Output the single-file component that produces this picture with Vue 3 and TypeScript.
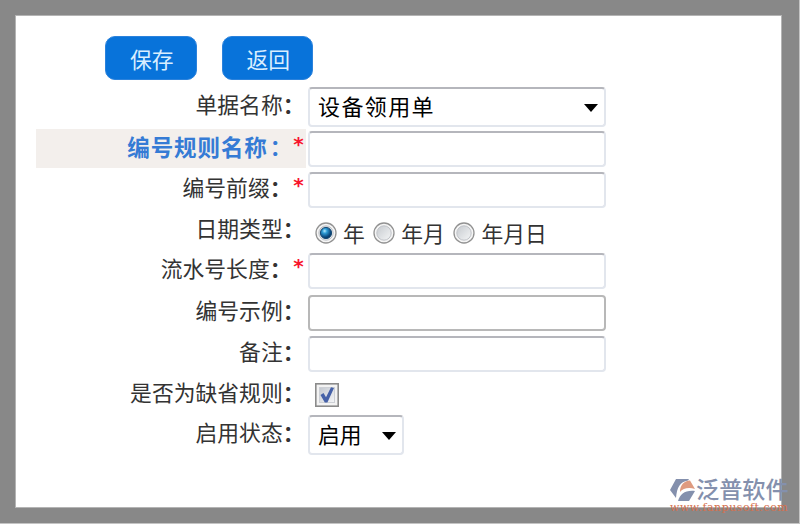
<script setup lang="ts">
import { ref } from 'vue'

interface Row {
  key: string
  label: string
  kind: 'select' | 'text' | 'radio' | 'check' | 'status'
  required?: boolean
  active?: boolean
  framed?: boolean
}

const rows: Row[] = [
  { key: 'doc', label: '单据名称', kind: 'select' },
  { key: 'rule', label: '编号规则名称', kind: 'text', required: true, active: true },
  { key: 'prefix', label: '编号前缀', kind: 'text', required: true },
  { key: 'date', label: '日期类型', kind: 'radio' },
  { key: 'length', label: '流水号长度', kind: 'text', required: true },
  { key: 'sample', label: '编号示例', kind: 'text', framed: true },
  { key: 'remark', label: '备注', kind: 'text' },
  { key: 'default', label: '是否为缺省规则', kind: 'check' },
  { key: 'status', label: '启用状态', kind: 'status' },
]

const dateTypes = ['年', '年月', '年月日']
const dateType = ref('年')
const isDefault = ref(true)
const values = ref<Record<string, string>>({})
</script>

<template>
  <div class="frame">
    <main class="panel">
      <div class="actions">
        <button class="btn" type="button">保存</button>
        <button class="btn" type="button">返回</button>
      </div>
      <div v-for="row in rows" :key="row.key" class="row" :class="'row-' + row.key">
        <div class="label" :class="{ active: row.active }">
          <span class="name">{{ row.label }}</span><span class="colon">：</span><span v-if="row.required" class="star">*</span>
        </div>
        <div class="control">
          <div v-if="row.kind === 'select'" class="box select wide">
            <span>设备领用单</span>
            <svg class="arrow" viewBox="0 0 14 8"><path d="M0 0h14L7 8z" /></svg>
          </div>
          <input v-else-if="row.kind === 'text'" v-model="values[row.key]" class="box" :class="{ framed: row.framed }" type="text" />
          <div v-else-if="row.kind === 'radio'" class="radios">
            <label v-for="t in dateTypes" :key="t" class="option" @click="dateType = t">
              <svg class="radio" viewBox="0 0 22 22">
                <defs>
                  <radialGradient id="ball" cx=".38" cy=".32" r=".7">
                    <stop offset="0" stop-color="#b5eaff" />
                    <stop offset=".3" stop-color="#2e9cd5" />
                    <stop offset=".75" stop-color="#0b4c82" />
                    <stop offset="1" stop-color="#08305a" />
                  </radialGradient>
                  <linearGradient id="dish" x1="0" y1="0" x2="1" y2="1">
                    <stop offset="0" stop-color="#c6cacf" />
                    <stop offset="1" stop-color="#f5f6f7" />
                  </linearGradient>
                </defs>
                <circle cx="11" cy="11" r="10" fill="#f5f5f5" stroke="#929292" stroke-width="1.3" />
                <circle cx="11" cy="11" r="7.2" fill="url(#dish)" stroke="#c0c3c8" />
                <circle v-if="dateType === t" cx="11" cy="11" r="5.6" fill="url(#ball)" stroke="#174b75" />
              </svg>
              <span>{{ t }}</span>
            </label>
          </div>
          <svg v-else-if="row.kind === 'check'" class="check" viewBox="0 0 24 24" @click="isDefault = !isDefault">
            <defs>
              <linearGradient id="well" x1="0" y1="0" x2="1" y2="1">
                <stop offset="0" stop-color="#c3c8d0" />
                <stop offset="1" stop-color="#f5f6f8" />
              </linearGradient>
            </defs>
            <rect x=".8" y=".8" width="22.4" height="22.4" fill="#f3f3f3" stroke="#8b8b8b" stroke-width="1.6" />
            <rect x="4.5" y="4.5" width="15" height="15" fill="url(#well)" stroke="#cdd0d6" />
            <path v-if="isDefault" d="M5.500 12l3-2 2.500 4.300L16 4.200l3 .8-6.600 14.500h-2.600z" fill="#4561a8" />
          </svg>
          <div v-else class="box select narrow">
            <span>启用</span>
            <svg class="arrow" viewBox="0 0 14 8"><path d="M0 0h14L7 8z" /></svg>
          </div>
        </div>
      </div>
    </main>
    <div class="brand">
      <div class="brand-top">
        <svg class="logo" viewBox="0 0 26 24">
          <path d="M6 1h13l-1 1.500C10 4 7 9 6 20L0 12z" fill="#8490ad" />
          <path d="M10 14C10 7 14 3 20 2.500L25 11C19 9 13 10 10 14z" fill="#df9b80" />
          <path d="M8 23C10 16 15 12 25 13L19 23z" fill="#8490ad" />
        </svg>
        <span class="brand-name">泛普软件</span>
      </div>
      <div class="brand-url">www.fanpusoft.com</div>
    </div>
  </div>
</template>

<style>
body {
  margin: 0;
  overflow: hidden;
}
</style>

<style scoped>
.frame {
  position: relative;
  box-sizing: border-box;
  width: 800px;
  height: 524px;
  padding: 16px 18px 16px 16px;
  background: #888;
  border-right: 1px solid #c4c4c4;
  border-bottom: 1px solid #c4c4c4;
  font-family: "Noto Sans CJK SC", sans-serif;
  font-size: 21.8px;
  color: #333;
}
.panel {
  box-sizing: border-box;
  height: 491px;
  padding: 20px 0 0 20px;
  background: #fff;
  box-shadow: 0 0 0 1px #b4b4b4;
}
.actions {
  display: flex;
  gap: 25px;
  height: 50px;
  padding-left: 69px;
}
.btn {
  width: 91.500px;
  height: 44px;
  padding: 2px 0 0 2px;
  border: 1px solid #2b82dc;
  border-radius: 10px;
  background: #0873da;
  color: #d9eeff;
  font: 21.8px/36px "Noto Sans CJK SC", sans-serif;
}
.row {
  display: grid;
  grid-template-columns: 270px 1fr;
  height: 41px;
}
.row-doc {
  height: 43px;
}
.row-date,
.row-default {
  height: 40px;
}
.label {
  display: flex;
  justify-content: flex-end;
  box-sizing: border-box;
  height: 39px;
  padding-right: 1.500px;
  line-height: 34px;
}
.row-doc .label,
.row-sample .label,
.row-remark .label,
.row-default .label,
.row-status .label {
  line-height: 36px;
}
.active {
  background: #f3efec;
  color: #357bd5;
}
.active .name {
  margin-right: 3px;
  font-size: 22.500px;
  font-weight: 700;
  letter-spacing: 0.9px;
}
.active .colon {
  margin-left: -1px;
}
.colon {
  font-weight: 700;
}
.star {
  width: 12px;
  margin-left: 1px;
  color: #f8142c;
  font: 700 20px/30px "DejaVu Sans Mono", monospace;
}
.control {
  padding: 2px 0 0 2px;
}
.row-doc .control,
.row-status .control {
  padding-top: 1px;
}
.row-sample .control,
.row-remark .control {
  padding-top: 3px;
}
.box {
  display: block;
  box-sizing: border-box;
  width: 298px;
  height: 36px;
  padding: 0 8px;
  border: 2px solid #e2e6ed;
  border-top-color: #b5b6bc;
  border-radius: 4px;
  background: #fff;
  outline: none;
  font: inherit;
}
.framed {
  border-color: #b8b8b8;
}
.select {
  display: flex;
  align-items: center;
  justify-content: space-between;
  height: 40px;
  padding-bottom: 4px;
  color: #000;
}
.wide {
  font-size: 22px;
  letter-spacing: 1.4px;
}
.narrow {
  width: 96px;
  padding-right: 8px;
}
.arrow {
  width: 14px;
  height: 8px;
  margin-top: 6px;
  margin-right: -2px;
}
.radios {
  display: flex;
  gap: 8.500px;
  padding-left: 7px;
}
.option {
  display: flex;
  gap: 6px;
  line-height: 40px;
}
.radio {
  width: 22px;
  height: 22px;
  margin-top: 9px;
}
.check {
  display: block;
  width: 24px;
  height: 24px;
  margin: 7px 0 0 7px;
}
.brand {
  position: absolute;
  top: 476px;
  left: 670px;
}
.brand-top {
  display: flex;
  height: 26px;
}
.logo {
  width: 26px;
  height: 24px;
  margin-top: 2px;
}
.brand-name {
  color: #8490ad;
  font-size: 23.2px;
  font-weight: 500;
  line-height: 25px;
}
.brand-url {
  color: #d5704e;
  font: 11px/12px "DejaVu Serif", serif;
  letter-spacing: 0.5px;
}
</style>
